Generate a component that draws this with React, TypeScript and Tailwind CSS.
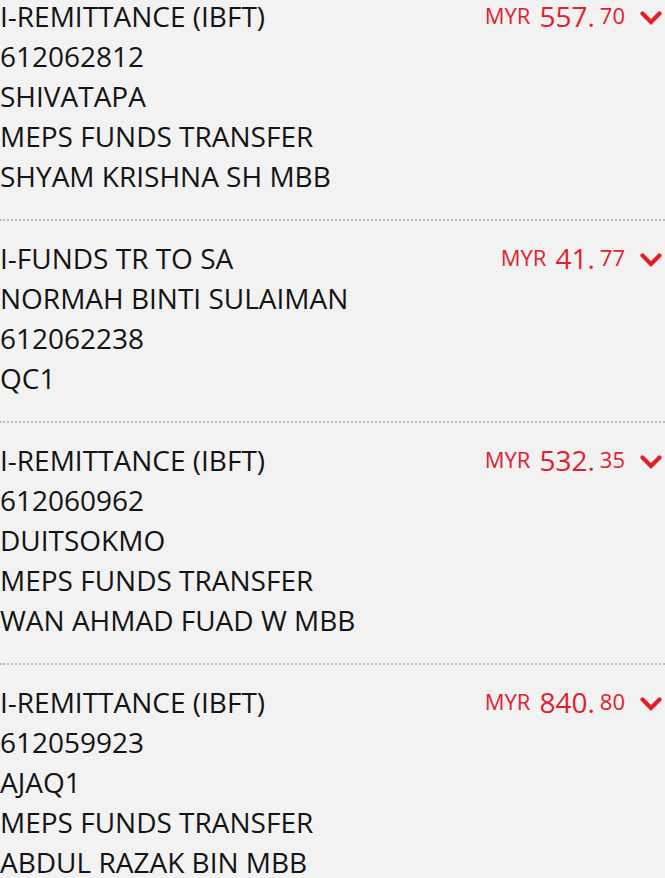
type Txn = {
  lines: string[]
  whole: string
  cents: string
}

const txns: Txn[] = [
  {
    lines: ['I-REMITTANCE (IBFT)', '612062812', 'SHIVATAPA', 'MEPS FUNDS TRANSFER', 'SHYAM KRISHNA SH MBB'],
    whole: '557.',
    cents: '70',
  },
  {
    lines: ['I-FUNDS TR TO SA', 'NORMAH BINTI SULAIMAN', '612062238', 'QC1'],
    whole: '41.',
    cents: '77',
  },
  {
    lines: ['I-REMITTANCE (IBFT)', '612060962', 'DUITSOKMO', 'MEPS FUNDS TRANSFER', 'WAN AHMAD FUAD W MBB'],
    whole: '532.',
    cents: '35',
  },
  {
    lines: ['I-REMITTANCE (IBFT)', '612059923', 'AJAQ1', 'MEPS FUNDS TRANSFER', 'ABDUL RAZAK BIN MBB'],
    whole: '840.',
    cents: '80',
  },
]

function Chevron() {
  return (
    <svg width="22" height="14" viewBox="0 0 22 14" className="ml-[15px] mt-[15px]">
      <path
        d="M2.5 2.5 L11 11 L19.5 2.5"
        fill="none"
        stroke="#e31e24"
        strokeWidth="4.2"
        strokeLinecap="round"
        strokeLinejoin="miter"
      />
    </svg>
  )
}

function TxnRow({ txn, last }: { txn: Txn; last: boolean }) {
  return (
    <div className={last ? 'pt-[17px] pb-[23px]' : 'pt-[17px] pb-[23px] border-b-2 border-dotted border-[#bdbdbd]'}>
      <div className="flex justify-between items-start">
        <div className="flex flex-col text-[28px] leading-[40px] text-[#141414]">
          {txn.lines.map((l, i) => (
            <span key={i}>{l}</span>
          ))}
        </div>
        <div className="flex items-start text-[#e1202d] pr-[3px]">
          <span className="text-[22px] leading-[39px]">MYR</span>
          <span className="text-[28px] leading-[40px] ml-[9px]">{txn.whole}</span>
          <span className="text-[22px] leading-[39px] ml-[5px]">{txn.cents}</span>
          <Chevron />
        </div>
      </div>
    </div>
  )
}

export default function App() {
  return (
    <div
      className="min-h-screen bg-[#f2f2f2] overflow-hidden"
      style={{ fontFamily: '"Open Sans", "Noto Sans", sans-serif' }}
    >
      <div className="-mt-[21px]">
        {txns.map((t, i) => (
          <TxnRow key={i} txn={t} last={i === txns.length - 1} />
        ))}
      </div>
    </div>
  )
}
